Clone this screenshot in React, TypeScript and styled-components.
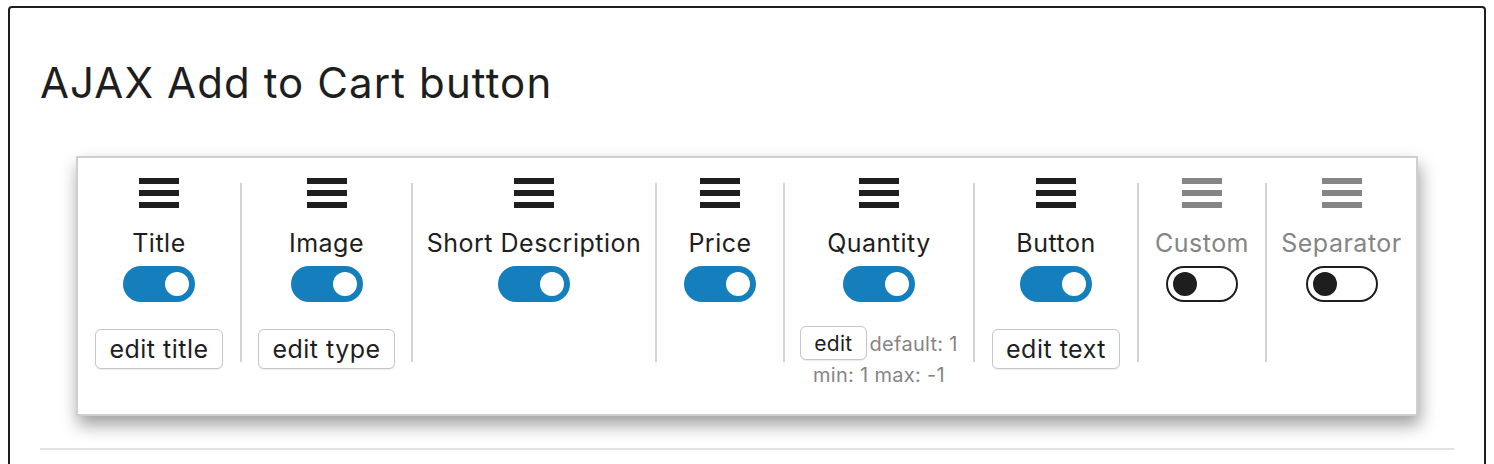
import React from "react";
import styled, { createGlobalStyle } from "styled-components";

const Global = createGlobalStyle`
  html, body { margin: 0; padding: 0; background: #fff; }
  body { font-family: Inter, "Noto Sans", "Liberation Sans", sans-serif; color: #1e1e1e; }
  * { box-sizing: border-box; }
`;

const Page = styled.div`
  padding: 6px 8px 0 8px;
  height: 464px;
  overflow: hidden;
`;

const Card = styled.section`
  border: 2px solid #1e1e1e;
  border-radius: 4px;
  padding: 0 30px 40px 30px;
  min-height: 520px;
`;

const Heading = styled.h2`
  margin: 54px 0 0 0;
  font-size: 42px;
  line-height: 41px;
  font-weight: 400;
  color: #1e1e1e;
  letter-spacing: 1.1px;
`;

const Panel = styled.div`
  margin: 53px 36px 0 36px;
  height: 260px;
  border: 2px solid #cfcfcf;
  background: #fff;
  box-shadow: 2px 9px 16px rgba(0, 0, 0, 0.38);
  display: flex;
  align-items: flex-start;
  padding-top: 20px;
`;

const Column = styled.div<{ $w: number }>`
  flex: 0 0 ${(p) => p.$w}px;
  display: flex;
  flex-direction: column;
  align-items: center;
`;

const Divider = styled.div`
  flex: 0 0 2px;
  margin-top: 5px;
  height: 179px;
  background: #d4d4d4;
`;

const Label = styled.div<{ $off?: boolean }>`
  margin-top: 21px;
  font-size: 25px;
  line-height: 29px;
  letter-spacing: 0.5px;
  color: ${(p) => (p.$off ? "#858585" : "#1e1e1e")};
  white-space: nowrap;
`;

const Track = styled.div<{ $on: boolean }>`
  margin-top: 8px;
  width: 72px;
  height: 36px;
  border-radius: 18px;
  display: flex;
  align-items: center;
  justify-content: ${(p) => (p.$on ? "flex-end" : "flex-start")};
  padding: ${(p) => (p.$on ? "0 6px" : "0 5px")};
  background: ${(p) => (p.$on ? "#157ebc" : "#fff")};
  border: ${(p) => (p.$on ? "none" : "2px solid #1e1e1e")};
`;

const Knob = styled.div<{ $on: boolean }>`
  width: 24px;
  height: 24px;
  border-radius: 50%;
  background: ${(p) => (p.$on ? "#fff" : "#1e1e1e")};
`;

const EditButton = styled.button`
  margin-top: 27px;
  height: 40px;
  padding: 0 13px;
  border: 1px solid #c6c6c6;
  border-radius: 6px;
  background: #fff;
  box-shadow: 0 1px 1px rgba(0, 0, 0, 0.08);
  font-family: inherit;
  font-size: 25px;
  letter-spacing: 0.5px;
  line-height: 1;
  color: #1e1e1e;
  white-space: nowrap;
`;

const QtyRow = styled.div`
  margin-top: 24px;
  display: flex;
  align-items: baseline;
  gap: 3px;
`;

const SmallButton = styled.button`
  height: 34px;
  padding: 0 13px;
  border: 1px solid #c6c6c6;
  border-radius: 6px;
  background: #fff;
  box-shadow: 0 1px 1px rgba(0, 0, 0, 0.08);
  font-family: inherit;
  font-size: 21px;
  letter-spacing: 0.3px;
  line-height: 1;
  color: #1e1e1e;
`;

const Note = styled.span`
  font-size: 20px;
  line-height: 23px;
  letter-spacing: 0.3px;
  color: #858585;
  white-space: nowrap;
`;

const NoteLine = styled(Note)`
  display: block;
  margin-top: 4px;
`;

const Rule = styled.hr`
  margin: 32px 0 0 0;
  border: none;
  height: 2px;
  background: #e2e2e6;
`;

const Hamburger = ({ off }: { off?: boolean }) => (
  <svg width="40" height="30" viewBox="0 0 40 30" fill={off ? "#858585" : "#1e1e1e"}>
    <rect x="0" y="0" width="40" height="6" />
    <rect x="0" y="12" width="40" height="6" />
    <rect x="0" y="24" width="40" height="6" />
  </svg>
);

type Item = {
  label: string;
  on: boolean;
  w: number;
  button?: string;
  qty?: boolean;
};

const items: Item[] = [
  { label: "Title", on: true, w: 162, button: "edit title" },
  { label: "Image", on: true, w: 169, button: "edit type" },
  { label: "Short Description", on: true, w: 242 },
  { label: "Price", on: true, w: 126 },
  { label: "Quantity", on: true, w: 188, qty: true },
  { label: "Button", on: true, w: 162, button: "edit text" },
  { label: "Custom", on: false, w: 126 },
  { label: "Separator", on: false, w: 149 },
];

export default function App() {
  return (
    <>
      <Global />
      <Page>
        <Card>
          <Heading>AJAX Add to Cart button</Heading>
          <Panel>
            {items.map((it, i) => (
              <React.Fragment key={it.label}>
                {i > 0 && <Divider />}
                <Column $w={it.w}>
                  <Hamburger off={!it.on} />
                  <Label $off={!it.on}>{it.label}</Label>
                  <Track $on={it.on}>
                    <Knob $on={it.on} />
                  </Track>
                  {it.button && <EditButton>{it.button}</EditButton>}
                  {it.qty && (
                    <>
                      <QtyRow>
                        <SmallButton>edit</SmallButton>
                        <Note>default: 1</Note>
                      </QtyRow>
                      <NoteLine>min: 1 max: -1</NoteLine>
                    </>
                  )}
                </Column>
              </React.Fragment>
            ))}
          </Panel>
          <Rule />
        </Card>
      </Page>
    </>
  );
}
